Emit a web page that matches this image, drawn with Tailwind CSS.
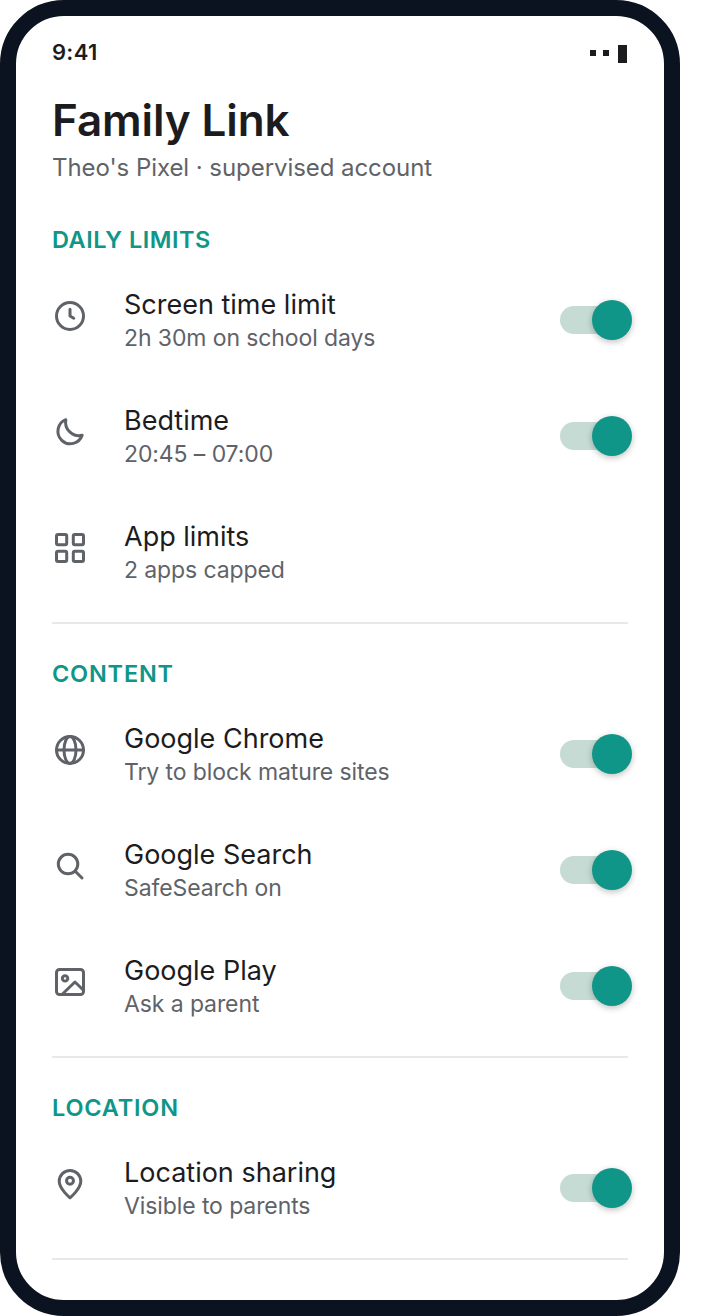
<!DOCTYPE html>
<html><head><meta charset="utf-8"><script src="https://cdn.jsdelivr.net/npm/@tailwindcss/browser@4"></script></head>
<body class="bg-white font-['Inter',sans-serif]">
<div class="w-[680px] h-[1316px] rounded-[64px] border-[16px] border-[#0b1320] bg-white">
<div class="px-[36px] pt-[24px]">
  <div class="flex items-center justify-between h-[24px]">
    <span class="text-[22px] leading-[24px] font-semibold tracking-[0.3px] text-[#1c1c1e]">9:41</span>
    <svg width="37" height="18" viewBox="0 0 37 18" class="block mr-[1px] mt-[4px]" fill="#1c1c1e"><rect x="0" y="5" width="6" height="6"/><rect x="13" y="5" width="6" height="6"/><rect x="28" y="0" width="9" height="18"/></svg>
  </div>
  <h1 class="mt-[28px] text-[44px] leading-[56px] font-semibold tracking-[-0.1px] text-[#1c1c1e]">Family Link</h1>
  <p class="mt-[4px] text-[24px] leading-[32px] tracking-[-0.06px] text-[#5f6368]">Theo's Pixel · supervised account</p>

  <section class="mt-[40px] pb-[12px] border-b-2 border-[#e8e8ec]">
    <h2 class="text-[23.5px] leading-[32px] font-semibold tracking-[0.5px] text-[#0f9688]">DAILY LIMITS</h2>
    <div class="mt-[6px]">
      <div class="flex items-center h-[116px]">
        <div class="w-[72px] shrink-0 -mt-[8px]"><svg class="block w-[36px] h-[36px]" viewBox="0 0 24 24" fill="none" stroke="#5f6368" stroke-width="2" stroke-linecap="round" stroke-linejoin="round"><circle cx="12" cy="12" r="9"/><path d="M12 7.5V12l2.5 1.5"/></svg></div>
        <div class="flex-1 pt-[2px]"><div class="text-[27px] leading-[34px] text-[#1c1c1e]">Screen time limit</div><div class="text-[23px] leading-[32px] tracking-[-0.1px] text-[#5f6368]">2h 30m on school days</div></div>
        <div class="relative w-[68px] h-[28px] rounded-full bg-[#c5dbd4]"><div class="absolute right-[-4px] top-[-6px] w-[40px] h-[40px] rounded-full bg-[#0f9688] shadow-[0_2px_6px_rgba(0,0,0,0.25)]"></div></div>
      </div>
      <div class="flex items-center h-[116px]">
        <div class="w-[72px] shrink-0 -mt-[8px]"><svg class="block w-[36px] h-[36px]" viewBox="0 0 24 24" fill="none" stroke="#5f6368" stroke-width="2" stroke-linecap="round" stroke-linejoin="round"><path d="M20.1 14.2A8.3 8.3 0 1 1 9.2 3.8 9 9 0 0 0 20.1 14.2z"/></svg></div>
        <div class="flex-1 pt-[2px]"><div class="text-[27px] leading-[34px] text-[#1c1c1e]">Bedtime</div><div class="text-[23px] leading-[32px] tracking-[-0.1px] text-[#5f6368]">20:45 – 07:00</div></div>
        <div class="relative w-[68px] h-[28px] rounded-full bg-[#c5dbd4]"><div class="absolute right-[-4px] top-[-6px] w-[40px] h-[40px] rounded-full bg-[#0f9688] shadow-[0_2px_6px_rgba(0,0,0,0.25)]"></div></div>
      </div>
      <div class="flex items-center h-[116px]">
        <div class="w-[72px] shrink-0 -mt-[8px]"><svg class="block w-[36px] h-[36px]" viewBox="0 0 24 24" fill="none" stroke="#5f6368" stroke-width="2" stroke-linecap="round" stroke-linejoin="round"><rect x="3" y="3" width="6.8" height="6.8" rx="1"/><rect x="14.2" y="3" width="6.8" height="6.8" rx="1"/><rect x="3" y="14.2" width="6.8" height="6.8" rx="1"/><rect x="14.2" y="14.2" width="6.8" height="6.8" rx="1"/></svg></div>
        <div class="flex-1 pt-[2px]"><div class="text-[27px] leading-[34px] text-[#1c1c1e]">App limits</div><div class="text-[23px] leading-[32px] tracking-[-0.1px] text-[#5f6368]">2 apps capped</div></div>
      </div>
    </div>
  </section>

  <section class="mt-[34px] pb-[12px] border-b-2 border-[#e8e8ec]">
    <h2 class="text-[23.5px] leading-[32px] font-semibold tracking-[0.8px] text-[#0f9688]">CONTENT</h2>
    <div class="mt-[6px]">
      <div class="flex items-center h-[116px]">
        <div class="w-[72px] shrink-0 -mt-[8px]"><svg class="block w-[36px] h-[36px]" viewBox="0 0 24 24" fill="none" stroke="#5f6368" stroke-width="2" stroke-linecap="round" stroke-linejoin="round"><circle cx="12" cy="12" r="9"/><path d="M3 12h18"/><ellipse cx="12" cy="12" rx="4" ry="9"/></svg></div>
        <div class="flex-1 pt-[2px]"><div class="text-[27px] leading-[34px] text-[#1c1c1e]">Google Chrome</div><div class="text-[23px] leading-[32px] tracking-[-0.1px] text-[#5f6368]">Try to block mature sites</div></div>
        <div class="relative w-[68px] h-[28px] rounded-full bg-[#c5dbd4]"><div class="absolute right-[-4px] top-[-6px] w-[40px] h-[40px] rounded-full bg-[#0f9688] shadow-[0_2px_6px_rgba(0,0,0,0.25)]"></div></div>
      </div>
      <div class="flex items-center h-[116px]">
        <div class="w-[72px] shrink-0 -mt-[8px]"><svg class="block w-[36px] h-[36px]" viewBox="0 0 24 24" fill="none" stroke="#5f6368" stroke-width="2" stroke-linecap="round" stroke-linejoin="round"><circle cx="10.7" cy="10.7" r="6.5"/><path d="M15.5 15.5l4.5 4.5"/></svg></div>
        <div class="flex-1 pt-[2px]"><div class="text-[27px] leading-[34px] text-[#1c1c1e]">Google Search</div><div class="text-[23px] leading-[32px] tracking-[-0.1px] text-[#5f6368]">SafeSearch on</div></div>
        <div class="relative w-[68px] h-[28px] rounded-full bg-[#c5dbd4]"><div class="absolute right-[-4px] top-[-6px] w-[40px] h-[40px] rounded-full bg-[#0f9688] shadow-[0_2px_6px_rgba(0,0,0,0.25)]"></div></div>
      </div>
      <div class="flex items-center h-[116px]">
        <div class="w-[72px] shrink-0 -mt-[8px]"><svg class="block w-[36px] h-[36px]" viewBox="0 0 24 24" fill="none" stroke="#5f6368" stroke-width="2" stroke-linecap="round" stroke-linejoin="round"><rect x="3" y="3.6" width="18" height="16.8" rx="2"/><circle cx="8.7" cy="9.6" r="1.8"/><path d="M7 20l8.3-8 5.7 5.5"/></svg></div>
        <div class="flex-1 pt-[2px]"><div class="text-[27px] leading-[34px] text-[#1c1c1e]">Google Play</div><div class="text-[23px] leading-[32px] tracking-[-0.1px] text-[#5f6368]">Ask a parent</div></div>
        <div class="relative w-[68px] h-[28px] rounded-full bg-[#c5dbd4]"><div class="absolute right-[-4px] top-[-6px] w-[40px] h-[40px] rounded-full bg-[#0f9688] shadow-[0_2px_6px_rgba(0,0,0,0.25)]"></div></div>
      </div>
    </div>
  </section>

  <section class="mt-[34px] pb-[12px] border-b-2 border-[#e8e8ec]">
    <h2 class="text-[23.5px] leading-[32px] font-semibold tracking-[0.8px] text-[#0f9688]">LOCATION</h2>
    <div class="mt-[6px]">
      <div class="flex items-center h-[116px]">
        <div class="w-[72px] shrink-0 -mt-[8px]"><svg class="block w-[36px] h-[36px]" viewBox="0 0 24 24" fill="none" stroke="#5f6368" stroke-width="2" stroke-linecap="round" stroke-linejoin="round"><path d="M19.2 10.2c0 5-7.2 11-7.2 11s-7.2-6-7.2-11a7.2 7.2 0 0 1 14.4 0z"/><circle cx="12" cy="9.8" r="2.3"/></svg></div>
        <div class="flex-1 pt-[2px]"><div class="text-[27px] leading-[34px] text-[#1c1c1e]">Location sharing</div><div class="text-[23px] leading-[32px] tracking-[-0.1px] text-[#5f6368]">Visible to parents</div></div>
        <div class="relative w-[68px] h-[28px] rounded-full bg-[#c5dbd4]"><div class="absolute right-[-4px] top-[-6px] w-[40px] h-[40px] rounded-full bg-[#0f9688] shadow-[0_2px_6px_rgba(0,0,0,0.25)]"></div></div>
      </div>
    </div>
  </section>
</div>
</div>
</body></html>
